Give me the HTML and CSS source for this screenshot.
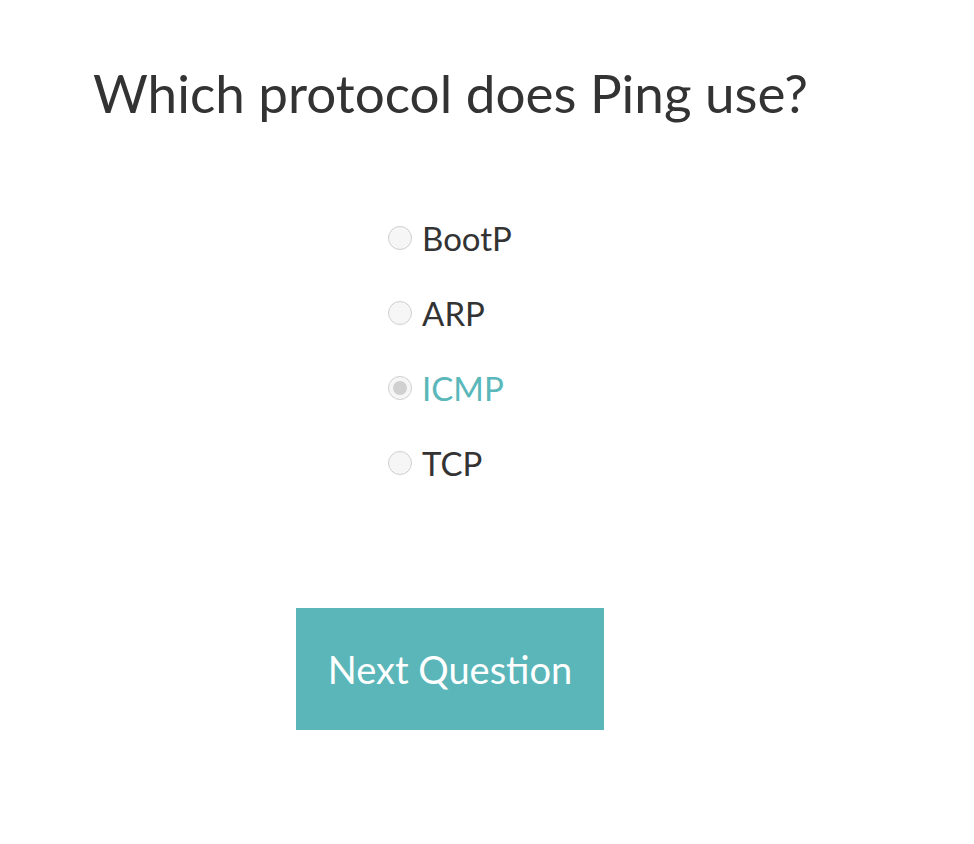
FILE: index.html
```html
<!DOCTYPE html>
<html>
<head>
<meta charset="utf-8">
<link rel="stylesheet" href="styles.css">
</head>
<body>
<div class="quiz">
  <h1 class="question">Which protocol does Ping use?</h1>
  <div class="options">
    <label class="option"><span class="radio"></span><span class="label">BootP</span></label>
    <label class="option"><span class="radio"></span><span class="label">ARP</span></label>
    <label class="option selected"><span class="radio"></span><span class="label">ICMP</span></label>
    <label class="option"><span class="radio"></span><span class="label">TCP</span></label>
  </div>
  <div class="actions">
    <button class="next">Next Question</button>
  </div>
</div>
</body>
</html>
```
FILE: styles.css
```css
html, body {
  margin: 0;
  padding: 0;
  background: #ffffff;
}
body {
  font-family: "Lato", "Open Sans", sans-serif;
  color: #333333;
}
.quiz {
  width: 900px;
  display: flex;
  flex-direction: column;
  align-items: center;
}
.question {
  align-self: flex-start;
  margin: 58px 0 0 93px;
  font-size: 53px;
  font-weight: 400;
  line-height: 70px;
  letter-spacing: 0;
}
.options {
  margin-top: 89px;
  display: flex;
  flex-direction: column;
  gap: 33px;
}
.option {
  display: flex;
  align-items: center;
  gap: 10px;
  font-size: 33px;
  line-height: 42px;
  height: 42px;
}
.radio {
  width: 24px;
  height: 24px;
  border-radius: 50%;
  border: 1px solid #cfcfcf;
  background: #f6f6f6;
  box-sizing: border-box;
  display: flex;
  align-items: center;
  justify-content: center;
}
.selected .radio::after {
  content: "";
  width: 14px;
  height: 14px;
  border-radius: 50%;
  background: #d0d0d0;
}
.selected .label {
  color: #5ab7ba;
}
.actions {
  margin-top: 124px;
}
.next {
  width: 308px;
  height: 122px;
  border: none;
  background: #5ab6b9;
  color: #ffffff;
  font-family: inherit;
  font-size: 38px;
  padding: 0;
}
```
